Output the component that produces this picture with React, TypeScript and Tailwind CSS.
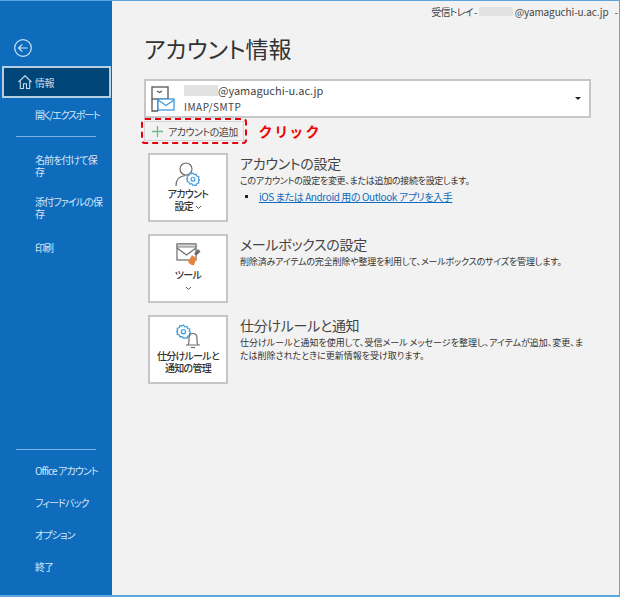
const cjk = "font-['Noto_Sans_CJK_JP','Liberation_Sans',sans-serif] [font-feature-settings:'palt']";

function BackIcon() {
  return (
    <svg width="20" height="20" viewBox="0 0 20 20" fill="none" stroke="#cfe3f5" strokeWidth="1.2">
      <circle cx="10" cy="10" r="8.3" />
      <path d="M14.5 10H5.8M9.3 6.3 5.6 10l3.7 3.7" />
    </svg>
  );
}

function HomeIcon() {
  return (
    <svg width="16" height="16" viewBox="0 0 16 16" fill="none" stroke="#c9d9e6" strokeWidth="1.1">
      <path d="M1.5 8 8 1.8 14.5 8M3.3 6.8v7.7h3.2V9.8h3v4.7h3.2V6.8" />
    </svg>
  );
}

function SideLink({ label }: { label: string }) {
  return <div className="ml-[35px] w-[68px] text-[10px] leading-[12px] tracking-[-0.9px] text-[#d5e6f5]">{label}</div>;
}

function Gear({ x, y, size }: { x: number; y: number; size: number }) {
  return (
    <svg x={x} y={y} width={size} height={size} viewBox="0 0 16 16" fill="none" stroke="#4a9fe0" strokeWidth="1.4">
      <path d="M8 1.2 9.4 3l2.3-.4.8 2.2 2.2.8-.4 2.4 1.3 1-1.3 1.4.4 2-2.2.8-.8 2.1-2.3-.4L8 15.2l-1.4-1.8-2.3.4-.8-2.1-2.2-.8.4-2L.4 8 1.7 7l-.4-2.4 2.2-.8.8-2.2 2.3.4z" />
      <circle cx="8" cy="8.2" r="2.2" />
    </svg>
  );
}

function Chevron() {
  return (
    <svg className="inline-block" width="7" height="5" viewBox="0 0 7 5" fill="none" stroke="#555" strokeWidth="1">
      <path d="m1 1 2.500 2.500L6 1" />
    </svg>
  );
}

function AccountIcon() {
  return (
    <svg width="26" height="25" viewBox="0 0 26 25" fill="none">
      <circle cx="11" cy="7" r="6" stroke="#6b6b6b" strokeWidth="1.2" />
      <path d="M1 24c0-6 3-10 9.500-10.500" stroke="#6b6b6b" strokeWidth="1.2" />
      <Gear x={11} y={10} size={14} />
    </svg>
  );
}

function MailboxIcon() {
  return (
    <svg width="25" height="25" viewBox="0 0 25 25" fill="none">
      <rect x="1" y="1" width="19" height="16" fill="#fff" stroke="#6b6b6b" strokeWidth="1.200" />
      <path d="M1 1h19v3H1z" fill="#d8d8d8" stroke="#6b6b6b" strokeWidth="0.8" />
      <path d="m1 5 9.500 7L20 5" stroke="#6b6b6b" strokeWidth="1.200" />
      <path d="m18 11 4-5 2.500 2.500-4 4z" fill="#6b6b6b" />
      <path d="m12 19 4-7 4.500 3.500L18 22c-2 .5-4-.5-6-3z" fill="#e8833a" />
    </svg>
  );
}

function RulesIcon() {
  return (
    <svg width="25" height="25" viewBox="0 0 25 25" fill="none">
      <Gear x={0} y={0} size={15} />
      <path d="M10 21h14M12 21c1.500-2 1-4 1-7 0-3 1.500-4.500 4-4.500s4 1.500 4 4.500c0 3-.5 5 1 7" stroke="#6b6b6b" strokeWidth="1.200" />
      <path d="M15 23.500h4" stroke="#6b6b6b" strokeWidth="1.200" />
    </svg>
  );
}

function AccountBoxIcon() {
  return (
    <svg width="24" height="26" viewBox="0 0 24 26" fill="none">
      <rect x="1" y="1" width="16" height="12" stroke="#555" strokeWidth="1.300" />
      <path d="M1 13v12h6M7 13v12M6 5l2.500 1.500L11 5" stroke="#555" strokeWidth="1.300" />
      <rect x="7" y="13" width="16" height="11" fill="#fff" stroke="#3f97d8" strokeWidth="1.300" />
      <path d="m7 14 8 5.500 8-5.500" stroke="#3f97d8" strokeWidth="1.300" />
    </svg>
  );
}

function Card({
  icon,
  label,
  title,
  children,
}: {
  icon: React.ReactNode;
  label: React.ReactNode;
  title: string;
  children: React.ReactNode;
}) {
  return (
    <div className="flex h-[69px] items-start">
      <div className="flex h-[69px] w-[80px] shrink-0 flex-col items-center border-2 border-[#c6c6c6] bg-white pt-[6px]">
        <div className="flex h-[27px] items-center">{icon}</div>
        <div className="text-center text-[10px] font-medium leading-[12px] tracking-[-0.7px] text-[#333]">{label}</div>
      </div>
      <div className="ml-[12px] flex-1">
        <div className="mt-[-1px] text-[14px] leading-[22px] tracking-[-0.3px] text-[#444]">{title}</div>
        <div className="text-[9px] leading-[13px] text-[#333]">{children}</div>
      </div>
    </div>
  );
}

export default function App() {
  return (
    <div className={`${cjk} flex h-[597px] w-[620px] overflow-hidden border-t border-b-2 border-r border-[#5aa6df] bg-[#f2f2f2]`}>
      <aside className="flex w-[112px] shrink-0 flex-col bg-[#0f6cbd] pt-[37px]">
        <div className="ml-[13px] h-[28px]">
          <BackIcon />
        </div>
        <div className="ml-[2px] flex h-[32px] w-[109px] items-center border-2 border-[#b5cfe4] bg-[#004578] pl-[13px]">
          <HomeIcon />
          <span className="ml-[2px] text-[10px] tracking-[-0.5px] text-[#c9d9e6]">情報</span>
        </div>
        <div className="ml-[35px] mt-[11px] whitespace-nowrap text-[10px] leading-[12px] tracking-[-1.2px] text-[#d5e6f5]">開く/エクスポート</div>
        <div className="ml-[16px] mt-[15px] h-[1px] w-[80px] bg-[#7fb2df]" />
        <div className="mt-[17px]">
          <SideLink label="名前を付けて保存" />
        </div>
        <div className="mt-[18px]">
          <SideLink label="添付ファイルの保存" />
        </div>
        <div className="mt-[22px]">
          <SideLink label="印刷" />
        </div>
        <div className="ml-[16px] mt-[195px] h-[1px] w-[80px] bg-[#7fb2df]" />
        <div className="mt-[15px]">
          <SideLink label="Office アカウント" />
        </div>
        <div className="mt-[20px]">
          <SideLink label="フィードバック" />
        </div>
        <div className="mt-[20px]">
          <SideLink label="オプション" />
        </div>
        <div className="mt-[20px]">
          <SideLink label="終了" />
        </div>
      </aside>

      <main className="min-w-0 flex-1">
        <div className="flex h-[20px] items-center justify-end pr-[1px] text-[10px] text-[#444]">
          <span className="tracking-[-0.8px]">受信トレイ -</span>
          <span className="mx-[2px] h-[9px] w-[34px] bg-[#e2e2e2]" />
          <span className="tracking-[-0.1px]">@yamaguchi-u.ac.jp</span>
          <span className="ml-[6px]">-</span>
        </div>
        <h1 className="ml-[32px] mt-[12px] text-[23px] font-normal leading-[30px] text-[#333]">アカウント情報</h1>
        <div className="ml-[32px] mt-[16px] flex h-[39px] w-[447px] items-center border-2 border-[#c6c6c6] bg-white pl-[5px] pr-[8px]">
          <AccountBoxIcon />
          <div className="ml-[9px] flex-1">
            <div className="flex items-center text-[11px] leading-[15px] text-[#444]">
              <span className="h-[11px] w-[34px] bg-[#e2e2e2]" />
              @yamaguchi-u.ac.jp
            </div>
            <div className="mt-[2px] text-[10px] leading-[14px] tracking-[0.5px] text-[#444]">IMAP/SMTP</div>
          </div>
          <div className="h-0 w-0 border-x-[3px] border-t-[3px] border-x-transparent border-t-[#222]" />
        </div>

        <div className="flex items-center">
          <div className="ml-[29px] flex h-[26px] w-[106px] items-center rounded-[4px] border-2 border-dashed border-[#e8000f] p-[1px]">
            <div className="flex h-full w-full items-center border border-[#d4d4d4] pl-[6px]">
              <svg width="13" height="13" viewBox="0 0 13 13" stroke="#6fb98f" strokeWidth="1.3">
                <path d="M6.500 1v11M1 6.500h11" />
              </svg>
              <span className="ml-[4px] text-[10px] tracking-[-0.5px] text-[#444]">アカウントの追加</span>
            </div>
          </div>
          <span className="ml-[12px] text-[14px] font-bold tracking-[3.500px] text-[#f00000]">クリック</span>
        </div>

        <div className="ml-[36px] mt-[9px] flex w-[444px] flex-col gap-[12px]">
          <Card
            icon={<AccountIcon />}
            label={
              <>
                アカウント
                <br />
                設定 <Chevron />
              </>
            }
            title="アカウントの設定"
          >
            <div className="tracking-[-0.3px]">このアカウントの設定を変更、または追加の接続を設定します。</div>
            <div className="mt-[3px] flex items-center">
              <span className="ml-[5px] mr-[11px] h-[3px] w-[3px] bg-[#222]" />
              <span className="text-[10px] tracking-[-0.4px] text-[#0f6cbd] underline">iOS または Android 用の Outlook アプリを入手</span>
            </div>
          </Card>
          <Card
            icon={<MailboxIcon />}
            label={
              <>
                ツール
                <br />
                <Chevron />
              </>
            }
            title="メールボックスの設定"
          >
            <div className="tracking-[-0.18px]">削除済みアイテムの完全削除や整理を利用して、メールボックスのサイズを管理します。</div>
          </Card>
          <Card
            icon={<RulesIcon />}
            label={
              <>
                仕分けルールと
                <br />
                通知の管理
              </>
            }
            title="仕分けルールと通知"
          >
            仕分けルールと通知を使用して、受信メール メッセージを整理し、アイテムが追加、変更、ま
            <br />
            たは削除されたときに更新情報を受け取ります。
          </Card>
        </div>
      </main>
    </div>
  );
}
